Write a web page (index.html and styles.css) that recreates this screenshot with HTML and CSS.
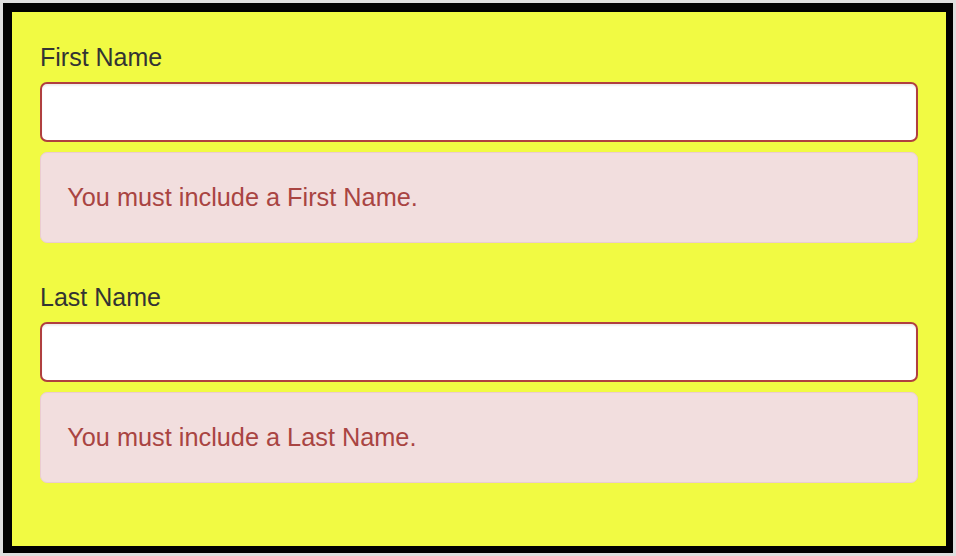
FILE: index.html
```html
<!DOCTYPE html>
<html>
<head>
<meta charset="utf-8">
<link rel="stylesheet" href="styles.css">
</head>
<body>
<div class="frame">
  <div class="group">
    <label class="label">First Name</label>
    <input class="input" type="text">
    <div class="alert">You must include a First Name.</div>
  </div>
  <div class="group">
    <label class="label">Last Name</label>
    <input class="input" type="text">
    <div class="alert">You must include a Last Name.</div>
  </div>
</div>
</body>
</html>
```
FILE: styles.css
```css
html, body {
  margin: 0;
  padding: 0;
}
body {
  background: #dedede;
  font-family: "Liberation Sans", Arial, Helvetica, sans-serif;
  height: 556px;
  overflow: hidden;
}
.frame {
  box-sizing: border-box;
  margin: 3px;
  height: 550px;
  border-style: solid;
  border-color: #000;
  border-width: 9px 7px 7px 9px;
  background: #f1fa43;
  padding: 27.5px 28px 0 28px;
}
.group {
  display: flex;
  flex-direction: column;
}
.label {
  display: block;
  font-size: 25px;
  line-height: 35px;
  color: #333;
  margin-bottom: 7.5px;
}
.input {
  box-sizing: border-box;
  display: block;
  width: 100%;
  height: 59.5px;
  margin: 0;
  border: 2px solid #b03f3f;
  border-radius: 7px;
  background: #fff;
  box-shadow: inset 0 1.75px 1.75px rgba(0, 0, 0, 0.075);
  font-size: 24.5px;
  padding: 0 21px;
}
.alert {
  box-sizing: border-box;
  margin-top: 10.5px;
  margin-bottom: 37px;
  height: 90.5px;
  padding: 27px 26.25px 0 26.25px;
  border: 1.75px solid #ebccd1;
  border-radius: 7px;
  background: #f2dede;
  color: #a94442;
  font-size: 25.3px;
  line-height: 35px;
}
```
